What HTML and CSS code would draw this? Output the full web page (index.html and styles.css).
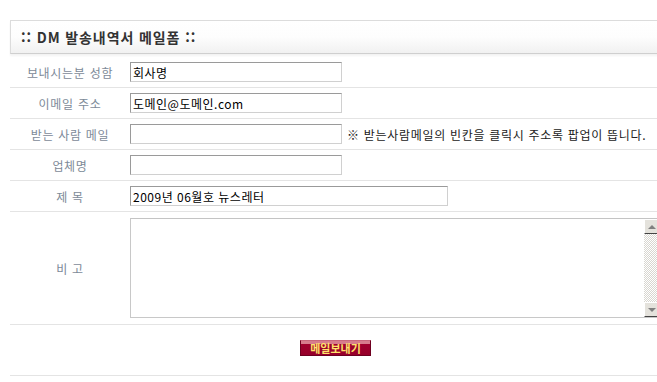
FILE: index.html
```html
<!DOCTYPE html>
<html lang="ko">
<head>
<meta charset="utf-8">
<title>DM 발송내역서 메일폼</title>
<link rel="stylesheet" href="styles.css">
</head>
<body>
<div class="page">
  <div class="head">:: DM 발송내역서 메일폼 ::</div>
  <form class="form">
    <div class="row">
      <label class="lbl">보내시는분 성함</label>
      <div class="fld"><input class="inp" type="text" value="회사명"></div>
    </div>
    <div class="row">
      <label class="lbl">이메일 주소</label>
      <div class="fld"><input class="inp" type="text" value="도메인@도메인.com"></div>
    </div>
    <div class="row">
      <label class="lbl">받는 사람 메일</label>
      <div class="fld"><input class="inp" type="text" value=""><span class="note">※ 받는사람메일의 빈칸을 클릭시 주소록 팝업이 뜹니다.</span></div>
    </div>
    <div class="row">
      <label class="lbl">업체명</label>
      <div class="fld"><input class="inp" type="text" value=""></div>
    </div>
    <div class="row">
      <label class="lbl">제 목</label>
      <div class="fld"><input class="inp inp-wide" type="text" value="2009년 06월호 뉴스레터"></div>
    </div>
    <div class="row row-tall">
      <label class="lbl">비 고</label>
      <div class="fld">
        <div class="memo">
          <textarea class="memo-text"></textarea>
          <div class="sbar">
            <div class="sbtn"><span class="tri tri-up"></span></div>
            <div class="strack"></div>
            <div class="sbtn"><span class="tri tri-down"></span></div>
          </div>
        </div>
      </div>
    </div>
    <div class="row row-btn">
      <button class="send" type="button">메일보내기</button>
    </div>
  </form>
</div>
</body>
</html>
```

FILE: styles.css
```css
html, body {
  margin: 0;
  padding: 0;
  overflow: hidden;
  background: #fff;
}
body {
  font-family: "Noto Sans CJK KR", "Noto Sans", sans-serif;
  font-size: 12px;
  color: #222;
}
.page {
  padding: 20px 0 0 10px;
  width: 651px;
}
.head {
  box-sizing: border-box;
  height: 34px;
  border: 1px solid #dcdcdc;
  border-bottom-color: #cfcfcf;
  background: linear-gradient(#ffffff 0%, #fdfdfd 50%, #f1f1f1 100%);
  box-shadow: 0 2px 2px rgba(0,0,0,0.05);
  padding-left: 10px;
  display: flex;
  align-items: center;
  font-size: 14px;
  font-weight: bold;
  color: #333;
  letter-spacing: 0.9px;
}
.form {
  margin: 3px 0 0;
}
.row {
  display: grid;
  grid-template-columns: 120px 1fr;
  align-items: center;
  height: 30px;
  border-bottom: 1px solid #e4e4e4;
}
.row-tall {
  height: 112px;
}
.row-btn {
  display: flex;
  justify-content: center;
  align-items: flex-start;
  height: 50px;
}
.lbl {
  text-align: center;
  color: #7d8a98;
  font-size: 12px;
  letter-spacing: 0.7px;
}
.fld {
  display: flex;
  align-items: center;
}
.inp {
  box-sizing: border-box;
  width: 212px;
  height: 20px;
  margin: 0;
  padding: 0 2px;
  border: 1px solid;
  border-color: #9a9a9a #d0d0d0 #d0d0d0 #9a9a9a;
  font-family: "Noto Sans CJK KR", "Noto Sans", sans-serif;
  font-size: 12px;
  letter-spacing: 0.5px;
  color: #000;
  background: #fff;
  outline: none;
}
.inp-wide {
  width: 318px;
}
.note {
  margin-left: 5px;
  color: #222;
  font-size: 12px;
  letter-spacing: 0.7px;
  white-space: nowrap;
}
.memo {
  box-sizing: border-box;
  display: flex;
  width: 530px;
  height: 100px;
  border: 1px solid #c8c8c8;
  border-top-color: #c4c4c4;
}
.memo-text {
  flex: 1;
  border: 0;
  margin: 0;
  padding: 2px;
  resize: none;
  outline: none;
  font-family: "Noto Sans CJK KR", sans-serif;
  font-size: 12px;
}
.sbar {
  width: 15px;
  display: flex;
  flex-direction: column;
}
.sbtn {
  box-sizing: border-box;
  height: 15px;
  background: #e4e2dc;
  border-top: 1px solid #fff;
  border-left: 1px solid #fff;
  border-right: 1px solid #9a9890;
  border-bottom: 1px solid #444;
  display: flex;
  align-items: center;
  justify-content: center;
}
.strack {
  flex: 1;
  background: repeating-conic-gradient(#d8d6d0 0 25%, #fff 0 50%) 0 0 / 2px 2px;
}
.tri {
  width: 0;
  height: 0;
  border-left: 4px solid transparent;
  border-right: 4px solid transparent;
}
.tri-up {
  border-bottom: 4px solid #808080;
}
.tri-down {
  border-top: 4px solid #808080;
}
.send {
  margin-top: 15px;
  box-sizing: border-box;
  width: 71px;
  height: 16px;
  padding: 0;
  border: 1px solid #6e0020;
  border-top-color: #c8687c;
  background: linear-gradient(#d77c8d 0, #d77c8d 3px, #a0002e 3px, #96002a 100%);
  color: #ffe36a;
  font-family: "Noto Sans CJK KR", sans-serif;
  font-size: 11px;
  font-weight: bold;
  line-height: 13px;
  cursor: pointer;
}
```
